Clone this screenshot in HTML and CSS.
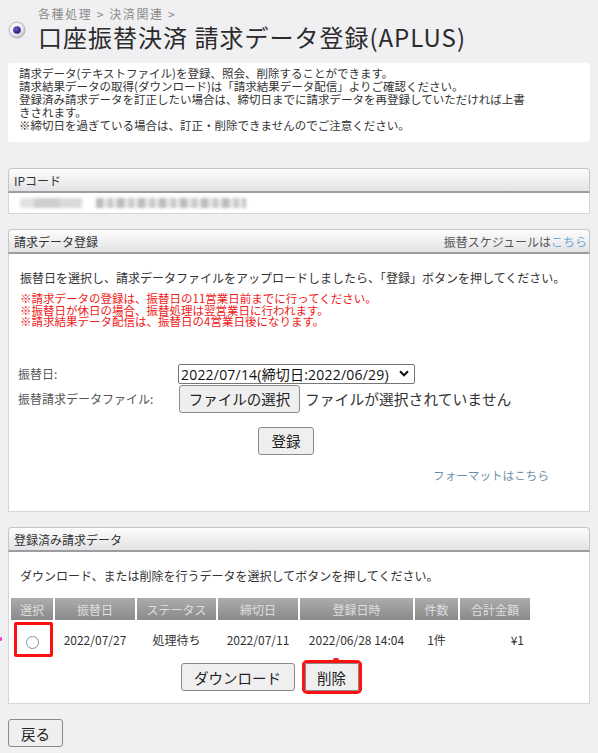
FILE: index.html
```html
<!DOCTYPE html>
<html lang="ja">
<head>
<meta charset="utf-8">
<title>口座振替決済 請求データ登録(APLUS)</title>
<link rel="stylesheet" href="styles.css">
</head>
<body>
<span class="edge-mark"></span>
<header class="page-head">
  <svg class="head-icon" viewBox="0 0 18 18" width="18" height="18" aria-hidden="true">
    <defs>
      <radialGradient id="ring" cx="40%" cy="35%" r="70%">
        <stop offset="0" stop-color="#ffffff"/>
        <stop offset="0.6" stop-color="#ececef"/>
        <stop offset="1" stop-color="#b8b8be"/>
      </radialGradient>
      <radialGradient id="dot" cx="40%" cy="35%" r="70%">
        <stop offset="0" stop-color="#6a5ad0"/>
        <stop offset="1" stop-color="#1e1470"/>
      </radialGradient>
    </defs>
    <circle cx="9" cy="9" r="8" fill="url(#ring)" stroke="#a9a9b0" stroke-width="0.8"/>
    <circle cx="9" cy="9" r="3.8" fill="url(#dot)"/>
  </svg>
  <div class="head-text">
    <div class="crumbs">各種処理 &gt; 決済関連 &gt;</div>
    <h1 class="title">口座振替決済 請求データ登録(APLUS)</h1>
  </div>
</header>

<div class="intro">
  請求データ(テキストファイル)を登録、照会、削除することができます。<br>
  請求結果データの取得(ダウンロード)は「請求結果データ配信」よりご確認ください。<br>
  登録済み請求データを訂正したい場合は、締切日までに請求データを再登録していただければ上書<br>きされます。<br>
  ※締切日を過ぎている場合は、訂正・削除できませんのでご注意ください。
</div>

<section class="panel panel-ip">
  <div class="panel-head"><span class="panel-title">IPコード</span></div>
  <div class="panel-body ip-body">
    <span class="blur blur-a"></span>
    <span class="blur blur-b"></span>
  </div>
</section>

<section class="panel panel-reg">
  <div class="panel-head">
    <span class="panel-title">請求データ登録</span>
    <span class="panel-aside">振替スケジュールは<span class="link">こちら</span></span>
  </div>
  <div class="panel-body reg-body">
    <p class="lead">振替日を選択し、請求データファイルをアップロードしましたら、「登録」ボタンを押してください。</p>
    <p class="notes">※請求データの登録は、振替日の11営業日前までに行ってください。<br>※振替日が休日の場合、振替処理は翌営業日に行われます。<br>※請求結果データ配信は、振替日の4営業日後になります。</p>
    <div class="form-area">
      <div class="form-grid">
        <div class="f-label f-label-1">振替日:</div>
        <div class="f-ctrl">
          <span class="select">
            <span class="select-val">2022/07/14(締切日:2022/06/29)</span>
            <svg class="chev" viewBox="0 0 10 7" width="10" height="7" aria-hidden="true"><path d="M1 1.3 L5 5.3 L9 1.3" fill="none" stroke="#111" stroke-width="2"/></svg>
          </span>
        </div>
        <div class="f-label f-label-2">振替請求データファイル:</div>
        <div class="f-ctrl">
          <span class="btn file-btn">ファイルの選択</span>
          <span class="file-name">ファイルが選択されていません</span>
        </div>
      </div>
      <div class="submit-row"><span class="btn submit-btn">登録</span></div>
      <div class="format-row"><span class="format-link">フォーマットはこちら</span></div>
    </div>
  </div>
</section>

<section class="panel panel-list">
  <div class="panel-head"><span class="panel-title">登録済み請求データ</span></div>
  <div class="panel-body list-body">
    <p class="lead">ダウンロード、または削除を行うデータを選択してボタンを押してください。</p>
    <div class="list-block">
      <table class="data-table">
        <thead>
          <tr>
            <th class="c-sel">選択</th>
            <th class="c-date">振替日</th>
            <th class="c-status">ステータス</th>
            <th class="c-date">締切日</th>
            <th class="c-reg">登録日時</th>
            <th class="c-cnt">件数</th>
            <th class="c-amt">合計金額</th>
          </tr>
        </thead>
        <tbody>
          <tr>
            <td class="c-sel"><span class="radio"></span><span class="mark-box"></span></td>
            <td class="c-date">2022/07/27</td>
            <td class="c-status">処理待ち</td>
            <td class="c-date">2022/07/11</td>
            <td class="c-reg">2022/06/28 14:04</td>
            <td class="c-cnt">1件</td>
            <td class="c-amt amt">¥1</td>
          </tr>
        </tbody>
      </table>
      <div class="action-row">
        <span class="btn dl-btn">ダウンロード</span>
        <span class="del-wrap"><span class="btn del-btn">削除</span><span class="del-mark"></span></span>
      </div>
    </div>
  </div>
</section>

<div class="back-row"><span class="btn back-btn">戻る</span></div>
</body>
</html>
```

FILE: styles.css
```css
* { box-sizing: border-box; }
html, body { margin: 0; }
body {
  position: relative;
  background: #f0f0f2;
  padding: 0 8px 4px;
  font-family: "Noto Sans CJK JP", "Noto Sans", sans-serif;
  font-size: 12px;
  color: #333;
}
p { margin: 0; }

.edge-mark {
  position: absolute;
  left: 0;
  top: 637px;
  width: 2px;
  height: 4px;
  background: #f03cc8;
  border-radius: 1px;
}

/* header */
.page-head {
  display: flex;
  align-items: flex-start;
  gap: 12px;
  height: 63px;
}
.head-icon { margin-top: 21px; flex: none; }
.head-text { padding-top: 7px; }
.crumbs {
  font-size: 12px;
  line-height: 14px;
  color: #8a8a8a;
  letter-spacing: 1.6px;
}
.title {
  margin: 0;
  font-size: 24px;
  font-weight: 400;
  line-height: 32px;
  letter-spacing: 1px;
  color: #2b2b2b;
}

/* intro */
.intro {
  background: #fff;
  border-radius: 3px;
  height: 79px;
  padding: 4px 11px 0;
  line-height: 13px;
  font-size: 11.5px;
  color: #333;
}

/* panels */
.panel { margin-top: 26px; }
.panel + .panel { margin-top: 15px; }
.panel-head {
  display: flex;
  justify-content: space-between;
  align-items: center;
  height: 25px;
  padding: 0 2px 0 5px;
  border: 1px solid #c6c6c8;
  border-bottom: 2px solid #9d9da0;
  border-radius: 4px 4px 0 0;
  background: linear-gradient(#fdfdfd, #e3e3e6);
  font-size: 12px;
  color: #333;
}
.panel-aside { color: #555; }
.link { color: #6eaad0; }
.panel-body {
  display: flow-root;
  background: #fff;
  border: 1px solid #d6d6d8;
  border-top: none;
}

.ip-body {
  height: 21px;
  display: flex;
  align-items: center;
  gap: 14px;
  padding-left: 11px;
}
.blur {
  display: block;
  height: 10px;
  filter: blur(1.4px);
}
.blur-a {
  width: 62px;
  background: linear-gradient(90deg, #e2e2e2 0 14px, #cfcfcf 14px 40px, #dadada 40px);
}
.blur-b {
  width: 150px;
  background: repeating-linear-gradient(90deg, #bcbcbc 0 7px, #e4e4e4 7px 12px, #c8c8c8 12px 17px, #e9e9e9 17px 21px);
}

/* registration panel */
.reg-body {
  height: 258px;
  padding-left: 9px;
}
.lead {
  margin-top: 15px;
  padding-left: 2px;
  line-height: 17px;
  color: #333;
}
.notes {
  margin-top: 7px;
  padding-left: 2px;
  font-size: 11.5px;
  line-height: 11.6px;
  color: #f01818;
}
.form-area {
  width: 536px;
  margin-top: 36px;
}
.form-grid {
  display: grid;
  grid-template-columns: 160px auto;
  row-gap: 1px;
  align-items: center;
}
.f-label { color: #555; }
.f-ctrl { display: flex; align-items: center; }
.select {
  display: inline-flex;
  align-items: center;
  justify-content: space-between;
  width: 237px;
  height: 20px;
  padding: 0 5px 0 2px;
  border: 1px solid #767676;
  border-radius: 2px;
  background: #fff;
  font-family: "Open Sans", "Noto Sans CJK JP", sans-serif;
  font-size: 14px;
  color: #111;
}
.select-val { letter-spacing: 0.2px; white-space: nowrap; }
.btn {
  display: inline-flex;
  align-items: center;
  justify-content: center;
  height: 28px;
  border: 1px solid #8a8a8a;
  border-radius: 3px;
  background: #efefef;
  font-size: 14.5px;
  color: #222;
}
.file-btn { width: 121px; margin-left: 1px; }
.file-name {
  margin-left: 5px;
  font-size: 14.8px;
  color: #333;
}
.submit-row {
  margin-top: 14px;
  text-align: center;
}
.submit-btn { width: 56px; }
.format-row {
  margin-top: 12px;
  text-align: right;
  padding-right: 5px;
  line-height: 16px;
}
.format-link { color: #6b8fa8; font-size: 11.6px; }

/* list panel */
.list-body {
  height: 152px;
}
.list-body .lead { padding-left: 11px; }
.list-block {
  width: max-content;
  margin-top: 14px;
}
.data-table {
  border-collapse: separate;
  border-spacing: 2px 0;
  font-size: 12px;
}
.data-table th {
  height: 22px;
  padding: 0;
  font-weight: normal;
  color: #dedede;
  background: linear-gradient(#acacac, #8a8a8a);
  text-align: center;
}
.data-table td {
  height: 33px;
  padding: 5px 0 0;
  text-align: center;
  color: #333;
}
.c-sel { width: 42px; position: relative; }
.c-date { width: 80px; }
.c-status { width: 79px; }
.c-reg { width: 113px; }
.c-cnt { width: 43px; }
.c-amt { width: 70px; }
.data-table td.amt { text-align: right; padding-right: 6px; }
.radio {
  display: inline-block;
  width: 13px;
  height: 13px;
  margin-top: 4px;
  border: 1px solid #8b8b8b;
  border-radius: 50%;
  background: #fff;
  vertical-align: middle;
}
.mark-box {
  position: absolute;
  left: 3px;
  top: 2px;
  width: 39px;
  height: 35px;
  border: 3px solid #ff1010;
  border-radius: 2px;
}
.action-row {
  display: flex;
  justify-content: center;
  gap: 8px;
  margin-top: 10px;
}
.dl-btn { width: 114px; }
.del-wrap { position: relative; display: inline-flex; }
.del-btn {
  width: 54px;
  margin: 0 2px;
  outline: 3px solid #ff1010;
  outline-offset: 0;
  border-radius: 2px;
}
.del-mark {
  position: absolute;
  left: 30px;
  top: -5px;
  width: 6px;
  height: 3px;
  border-radius: 2px;
  background: #ff2020;
}

.back-row { margin-top: 15px; }
.back-btn { width: 55px; }
```
